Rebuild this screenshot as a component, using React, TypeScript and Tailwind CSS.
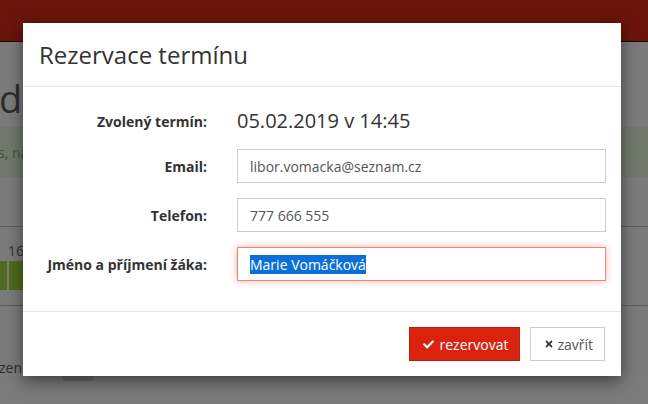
import React from "react";
import { FaCheck, FaTimes } from "react-icons/fa";

function Field({ label, children }: { label: string; children: React.ReactNode }) {
  return (
    <div className="flex items-center">
      <div className="w-[184px] shrink-0 text-right text-[14px] font-bold text-[#333]">{label}</div>
      <div className="ml-[30px] w-[369px]">{children}</div>
    </div>
  );
}

export default function App() {
  const font = { fontFamily: '"Open Sans", "Noto Sans", sans-serif' };
  return (
    <div className="relative h-[404px] w-[648px] overflow-hidden bg-[#7b7b7b]" style={font}>
      {/* dimmed page behind */}
      <div className="h-[42px] border-b border-[#1a0503] bg-[#6a140c]" />
      <div className="h-[36px]" />
      <div className="ml-[-1px] h-[40px] text-[38px] leading-[40px] text-[#2e2e2e]">d</div>
      <div className="h-[9px]" />
      <div className="flex h-[50px] items-center bg-[#6f7a6b] text-[14px] text-[#3a553a]">
        <span className="ml-[-2px]">s, na</span>
      </div>
      <div className="h-[49px]" />
      <div className="border-t border-[#5e5e5e]" />
      <div className="ml-[8px] mt-[14px] h-[20px] text-[14px] leading-[20px] text-[#333]">16</div>
      <div className="flex h-[29px] gap-[2px]">
        <div className="w-[7px] bg-[#4f6b1d]" />
        <div className="w-[40px] bg-[#4f6b1d]" />
      </div>
      <div className="h-[15px]" />
      <div className="border-t border-[#5e5e5e]" />
      <div className="mt-[52px] flex items-start">
        <span className="ml-[-1px] text-[14px] leading-[20px] text-[#2e2e2e]">zen</span>
        <div className="ml-[41px] mt-[3px] h-[20px] w-[30px] bg-[#6a6a6a]" />
      </div>

      {/* modal */}
      <div className="absolute left-[23px] top-[23px] w-[598px] bg-white shadow-[0_5px_15px_rgba(0,0,0,0.5)]">
        <div className="flex h-[64px] items-center border-b border-[#e5e5e5] px-4">
          <h4 className="text-[24px] leading-[30px] text-[#333]">Rezervace termínu</h4>
        </div>
        <div className="flex flex-col pb-[30px] pt-[17px]">
          <div className="mb-[11px] flex h-[34px] items-center">
            <div className="w-[184px] shrink-0 text-right text-[14px] font-bold text-[#333]">Zvolený termín:</div>
            <div className="ml-[30px] text-[20px] leading-[28px] text-[#333]">05.02.2019 v 14:45</div>
          </div>
          <div className="flex flex-col gap-[15px]">
            <Field label="Email:">
              <div className="flex h-[34px] items-center border border-[#ccc] px-3 text-[14px] text-[#555]">
                libor.vomacka@seznam.cz
              </div>
            </Field>
            <Field label="Telefon:">
              <div className="flex h-[34px] items-center border border-[#ccc] px-3 text-[14px] text-[#555]">
                777 666 555
              </div>
            </Field>
            <Field label="Jméno a příjmení žáka:">
              <div className="flex h-[34px] items-center border border-[#ef8572] px-3 text-[14px] shadow-[0_0_7px_rgba(235,90,75,0.45)]">
                <span className="bg-[#0b6fd7] leading-[19px] text-white">Marie Vomáčková</span>
              </div>
            </Field>
          </div>
        </div>
        <div className="flex justify-end gap-[10px] border-t border-[#e5e5e5] px-4 py-[15px]">
          <button className="flex h-[34px] items-center gap-[6px] border border-[#b81d0d] bg-[#d9230f] pl-[13px] pr-[11px] text-[14px] text-white">
            <FaCheck className="h-[11px] w-[11px]" />
            rezervovat
          </button>
          <button className="flex h-[34px] items-center gap-[3px] border border-[#ccc] bg-white pl-[13px] pr-[11px] text-[14px] text-[#555]">
            <FaTimes className="h-[10px] w-[10px] text-[#333]" />
            zavřít
          </button>
        </div>
      </div>
    </div>
  );
}
